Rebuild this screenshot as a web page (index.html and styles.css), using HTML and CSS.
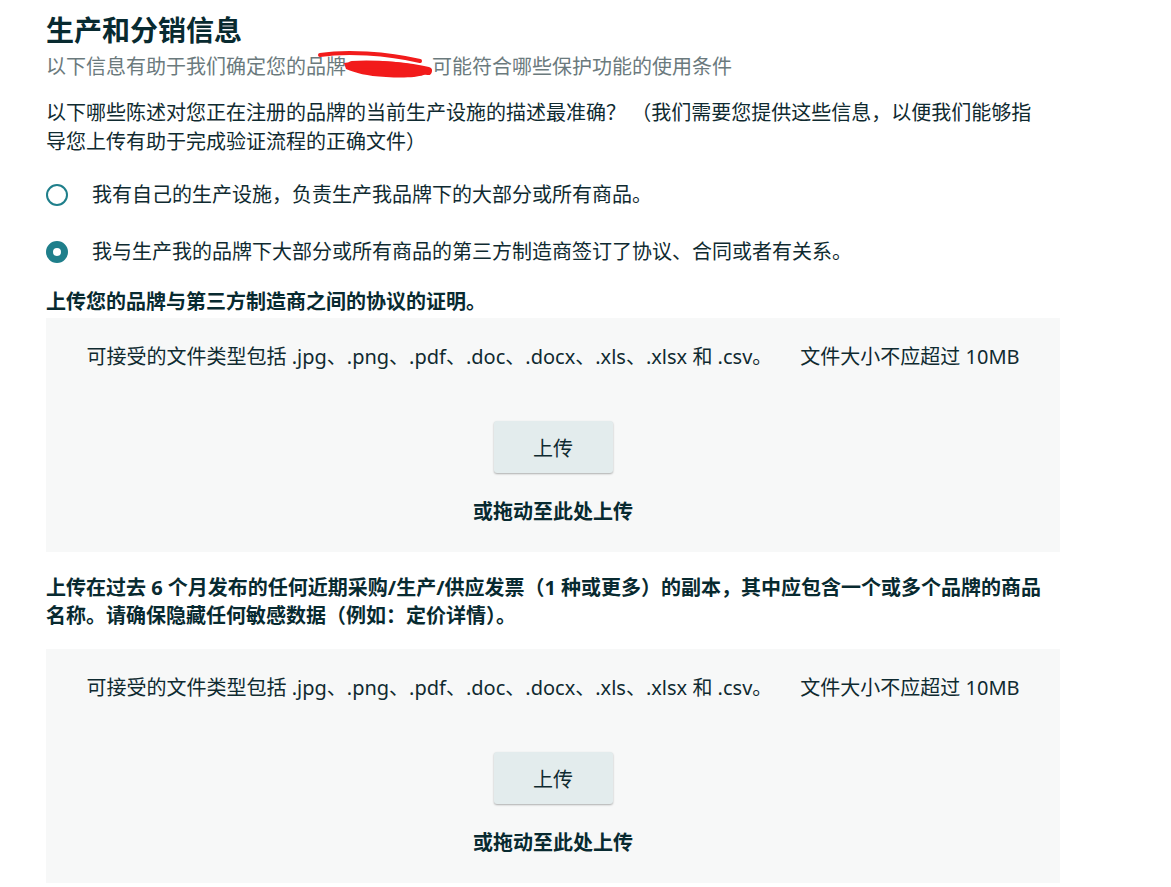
FILE: index.html
```html
<!doctype html>
<html lang="zh-CN">
<head>
  <meta charset="utf-8" />
  <meta name="viewport" content="width=device-width,initial-scale=1" />
  <title>生产和分销信息</title>
  <link rel="stylesheet" href="styles.css">
</head>
<body>
  <div class="page">
    <h1>生产和分销信息</h1>
    <p class="sub">以下信息有助于我们确定您的品牌<span class="redact"><svg viewBox="0 0 120 34" width="120" height="34"><path d="M4 6 C30 2 70 4 104 12" stroke="#f21b1b" stroke-width="4" fill="none" stroke-linecap="round"/><path d="M28 14 C55 10 90 12 114 20 C116 26 100 30 70 28 C50 27 40 24 30 20 Z" fill="#f21b1b"/><path d="M36 16 C60 14 96 18 112 22" stroke="#f21b1b" stroke-width="8" fill="none" stroke-linecap="round"/></svg></span>可能符合哪些保护功能的使用条件</p>

    <p class="question">以下哪些陈述对您正在注册的品牌的当前生产设施的描述最准确？ （我们需要您提供这些信息，以便我们能够指导您上传有助于完成验证流程的正确文件）</p>

    <div class="options">
      <label class="option">
        <span class="radio"></span>
        <span>我有自己的生产设施，负责生产我品牌下的大部分或所有商品。</span>
      </label>
      <label class="option">
        <span class="radio checked"></span>
        <span>我与生产我的品牌下大部分或所有商品的第三方制造商签订了协议、合同或者有关系。</span>
      </label>
    </div>

    <h2 class="upload-title first">上传您的品牌与第三方制造商之间的协议的证明。</h2>
    <div class="dropzone">
      <div class="types">
        <span>可接受的文件类型包括 .jpg、.png、.pdf、.doc、.docx、.xls、.xlsx 和 .csv。</span>
        <span>文件大小不应超过 10MB</span>
      </div>
      <button class="upload-btn">上传</button>
      <div class="drag">或拖动至此处上传</div>
    </div>

    <h2 class="upload-title">上传在过去 6 个月发布的任何近期采购/生产/供应发票（1 种或更多）的副本，其中应包含一个或多个品牌的商品名称。请确保隐藏任何敏感数据（例如：定价详情）。</h2>
    <div class="dropzone">
      <div class="types">
        <span>可接受的文件类型包括 .jpg、.png、.pdf、.doc、.docx、.xls、.xlsx 和 .csv。</span>
        <span>文件大小不应超过 10MB</span>
      </div>
      <button class="upload-btn">上传</button>
      <div class="drag">或拖动至此处上传</div>
    </div>
  </div>
</body>
</html>
```

FILE: styles.css
```css
:root { --ink:#0f2a30; --muted:#6b7a7d; --teal:#1f7f8b; --zone:#f7f8f8; }
html, body {
  margin:0; background:#fff; color:var(--ink);
  font-family:"Noto Sans", "Noto Sans CJK SC", sans-serif;
}
.page { width:1014px; padding:12px 0 0 46px; }
h1 { font-size:28px; line-height:36px; margin:0; font-weight:700; color:#082a30; }
.sub { font-size:20px; line-height:30px; margin:4px 0 0; color:var(--muted); }
.redact { display:inline-block; position:relative; width:86px; height:20px; vertical-align:middle; }
.redact svg { position:absolute; left:-30px; top:-10px; }
.question { font-size:20px; line-height:29px; margin:16px 0 0; padding-right:20px; }

.options { display:flex; flex-direction:column; gap:28px; margin-top:24px; }
.option { display:flex; align-items:center; gap:24px; font-size:20px; line-height:29px; }
.radio {
  width:18px; height:18px; border-radius:50%;
  border:2px solid var(--teal); box-sizing:content-box; flex:none;
}
.radio.checked { width:8px; height:8px; border:7px solid var(--teal); }

.upload-title { font-size:20px; line-height:28px; font-weight:700; margin:22px 0 19px; color:#082a30; }
.upload-title.first { margin:22px 0 2px; }

.dropzone {
  background:var(--zone);
  display:flex; flex-direction:column; align-items:center;
  padding:24px 0 26px;
}
.types { display:flex; gap:28px; font-size:20px; line-height:29px; }
.upload-btn {
  margin-top:50px; width:119px; height:52px;
  background:#e3eced; border:none; border-radius:3px;
  box-shadow:0 1px 2px rgba(0,0,0,0.3);
  font:inherit; font-size:20px; color:var(--ink); cursor:pointer;
}
.drag { margin-top:24px; font-size:20px; line-height:29px; font-weight:700; color:#082a30; }
```
